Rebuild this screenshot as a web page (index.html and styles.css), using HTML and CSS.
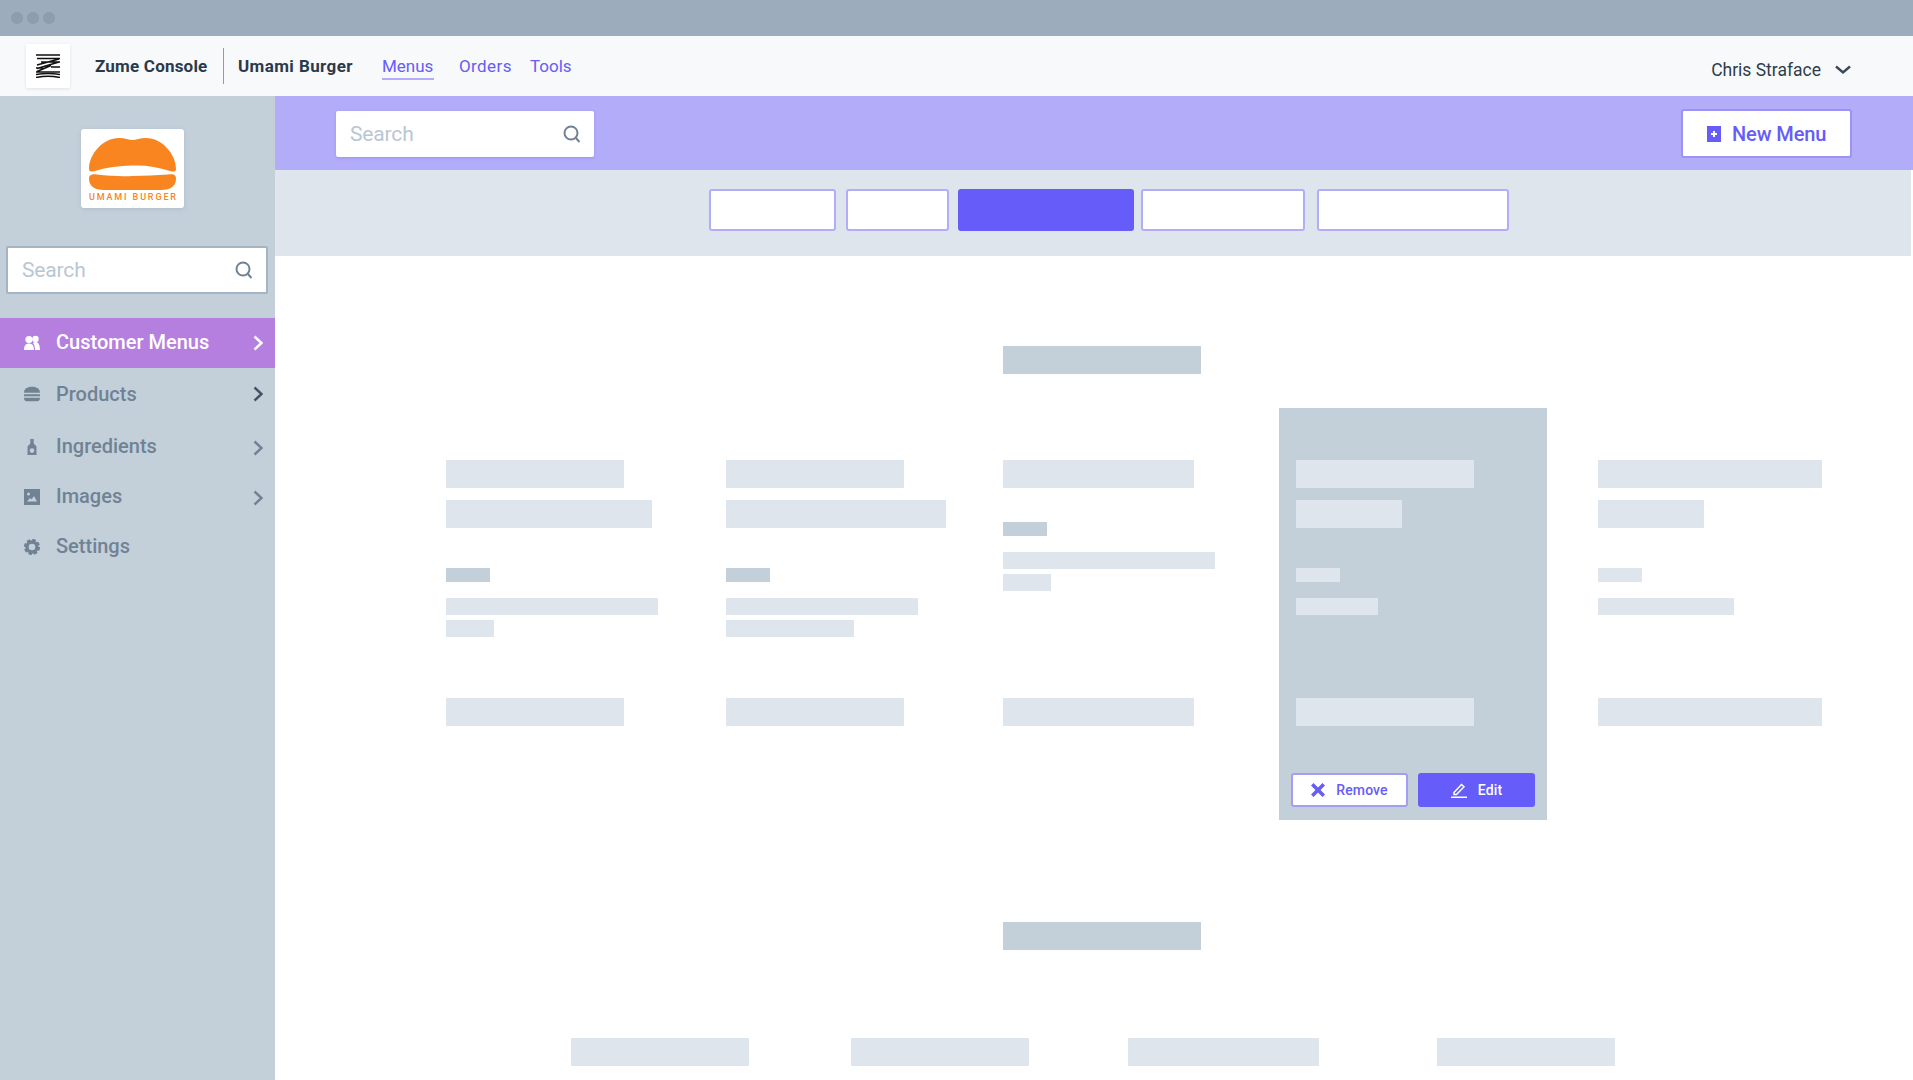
FILE: index.html
```html
<!DOCTYPE html>
<html lang="en">
<head>
<meta charset="utf-8">
<title>Zume Console</title>
<link rel="stylesheet" href="styles.css">
</head>
<body>
<div class="app">
  <div class="titlebar"><span class="dot"></span><span class="dot"></span><span class="dot"></span></div>
  <header class="topbar">
    <div class="zume">
      <svg width="24" height="24" viewBox="0 0 24 24" fill="none" stroke="#111">
        <path d="M0 1h24M1 4.500h23M5 8h19M1 11l22-6M1 14.500l22-6.500M1 17.500l14-6M15 13h9M0 14h7M0 18h24" stroke-width="1.600"/>
        <path d="M0 20.500q12-2 24 0M0 23.500q12-2.500 24 0" stroke-width="1.600"/>
      </svg>
    </div>
    <strong class="brand">Zume Console</strong>
    <span class="divider"></span>
    <strong class="client">Umami Burger</strong>
    <nav class="topnav">
      <a class="current">Menus</a>
      <a class="orders">Orders</a>
      <a class="tools">Tools</a>
    </nav>
    <div class="user">
      <span>Chris Straface</span>
      <svg width="16" height="10" viewBox="0 0 16 10" fill="none" stroke="#3a4856" stroke-width="2.400"><path d="M1 1.500l7 6 7-6"/></svg>
    </div>
  </header>
  <div class="body">
    <aside class="sidebar">
      <div class="brandcard">
        <svg width="103" height="79" viewBox="0 0 103 79">
          <path fill="#f98520" d="M8 40C8 25 22 9 38 9c6 0 10 2 13.500 2S59 9 65 9c16 0 30 16 30 31 0 3-3 3-6 2-12-4-24-6-38-5.500C38 37 26 38 14 42c-3 1-6 1-6-2z"/>
          <path fill="#f98520" d="M8 50c0-5 4-5 8-4.500 12 1.500 24 2 35.500 1.500 12-.5 24-.5 35.500-1.500 5-.5 8-.5 8 4.500 0 8-7 11-15 11H23C15 61 8 58 8 50z"/>
          <text class="brandtext" x="51.500" y="71" text-anchor="middle" textLength="87">UMAMI BURGER</text>
        </svg>
      </div>
      <div class="search side">
        <span>Search</span>
        <svg width="18" height="18" viewBox="0 0 18 18" fill="none" stroke="#718294" stroke-width="2"><circle cx="8" cy="8" r="6.500"/><path d="M12.500 12.500l4 4.500"/></svg>
      </div>
      <ul class="menu">
        <li class="item active">
          <svg width="16" height="16" viewBox="0 0 16 16" fill="currentColor"><circle cx="5" cy="4.500" r="3.600"/><circle cx="11.500" cy="4" r="3.200"/><path d="M0 15c0-4.500 2-6.500 5-6.500s5 2 5 6.500zM11 15c0-3-.5-5-2-7 1-.8 2-1 2.500-1 3 0 4.500 3 4.500 8z"/></svg>
          <span>Customer Menus</span>
          <svg class="chev" width="10" height="16" viewBox="0 0 10 16" fill="none" stroke="currentColor" stroke-width="2.400"><path d="M1.500 1.500l7 6.500-7 6.500"/></svg>
        </li>
        <li class="item products">
          <svg width="16" height="16" viewBox="0 0 16 16" fill="currentColor"><path d="M0 6.800C0 3 3 .8 8 .8s8 2.200 8 6zM0 8.300h16V10.300H0zM0 11.800h16c0 2-1 3.400-2.500 3.400h-11C1 15.200 0 13.800 0 11.800z"/></svg>
          <span>Products</span>
          <svg class="chev dark" width="10" height="16" viewBox="0 0 10 16" fill="none" stroke="currentColor" stroke-width="2.400"><path d="M1.500 1.500l7 6.500-7 6.500"/></svg>
        </li>
        <li class="item ingredients">
          <svg width="16" height="16" viewBox="0 0 16 16" fill="currentColor"><path fill-rule="evenodd" d="M6.300 0h3.400v4.500l2.800 3V16h-9V7.500l2.800-3zM8 9.300a2.300 2.300 0 1 0 0 4.600 2.300 2.300 0 0 0 0-4.600z"/></svg>
          <span>Ingredients</span>
          <svg class="chev low" width="10" height="16" viewBox="0 0 10 16" fill="none" stroke="currentColor" stroke-width="2.400"><path d="M1.500 1.500l7 6.500-7 6.500"/></svg>
        </li>
        <li class="item images">
          <svg width="16" height="16" viewBox="0 0 16 16" fill="currentColor"><path fill-rule="evenodd" d="M0 0h16v16H0zM3 12.500h10L10 7l-2.500 3.500L6 9zM4.500 3.500a1.500 1.500 0 1 0 0 3 1.500 1.500 0 0 0 0-3z"/></svg>
          <span>Images</span>
          <svg class="chev low" width="10" height="16" viewBox="0 0 10 16" fill="none" stroke="currentColor" stroke-width="2.400"><path d="M1.500 1.500l7 6.500-7 6.500"/></svg>
        </li>
        <li class="item settings">
          <svg width="16" height="16" viewBox="0 0 16 16"><circle cx="8" cy="8" r="5" fill="none" stroke="currentColor" stroke-width="3.400"/><circle cx="8" cy="8" r="7" fill="none" stroke="currentColor" stroke-width="2.200" stroke-dasharray="3.500 2"/></svg>
          <span>Settings</span>
        </li>
      </ul>
    </aside>
    <main class="main">
      <div class="actionbar">
        <div class="search top">
          <span>Search</span>
          <svg width="18" height="18" viewBox="0 0 18 18" fill="none" stroke="#718294" stroke-width="2"><circle cx="8" cy="8" r="6.500"/><path d="M12.500 12.500l4 4.500"/></svg>
        </div>
        <button class="newmenu" type="button">
          <svg width="14" height="16" viewBox="0 0 14 16"><path fill="#655cf9" d="M0 0h14v16H0z"/><path fill="#fff" d="M6 5h2v2h2v2H8v2H6V9H4V7h2z"/></svg>
          New Menu
        </button>
      </div>
      <div class="tabstrip">
        <span class="tab w127"></span>
        <span class="tab w103"></span>
        <span class="tab on w176"></span>
        <span class="tab w164"></span>
        <span class="tab w192"></span>
      </div>
      <section class="board">
        <div class="heading"><i class="bar dark b198"></i></div>
        <div class="grid">
          <div class="col">
            <i class="bar b178"></i><i class="bar b206"></i>
            <i class="chip dark"></i>
            <i class="line b212"></i><i class="line b48"></i>
            <i class="bar foot b178"></i>
          </div>
          <div class="col">
            <i class="bar b178"></i><i class="bar b220"></i>
            <i class="chip dark"></i>
            <i class="line b192"></i><i class="line b128"></i>
            <i class="bar foot b178"></i>
          </div>
          <div class="col">
            <i class="bar b191"></i>
            <i class="chip dark near"></i>
            <i class="line b212"></i><i class="line b48"></i>
            <i class="bar foot b191"></i>
          </div>
          <div class="col card">
            <i class="bar b178"></i><i class="bar b106"></i>
            <i class="chip"></i>
            <i class="line b82"></i>
            <i class="bar foot b178"></i>
            <div class="cardactions">
              <button class="mini ghost" type="button">
                <svg width="14" height="14" viewBox="0 0 14 14" fill="#655cf9"><path d="M0 2.500L2.500 0 7 4.500 11.500 0 14 2.500 9.500 7l4.500 4.500-2.500 2.500L7 9.500 2.500 14 0 11.500 4.500 7z"/></svg>
                Remove
              </button>
              <button class="mini solid" type="button">
                <svg width="16" height="16" viewBox="0 0 16 16" fill="none" stroke="#fff" stroke-width="1.500"><path d="M3 10.500L10.500 2.500l2.500 2.300L5.500 12.500H3zM0 15.300h16"/></svg>
                Edit
              </button>
            </div>
          </div>
          <div class="col">
            <i class="bar b224"></i><i class="bar b106"></i>
            <i class="chip"></i>
            <i class="line b136"></i>
            <i class="bar foot b224"></i>
          </div>
        </div>
        <div class="heading lower"><i class="bar dark b198"></i></div>
        <div class="footrow">
          <i class="bar b178"></i><i class="bar b178 gap102"></i><i class="bar b191 gap99"></i><i class="bar b178 gap118"></i>
        </div>
      </section>
    </main>
  </div>
</div>
</body>
</html>
```

FILE: styles.css
```css
* { box-sizing: border-box; }
html, body { margin: 0; height: 100%; background: #fff; }
body { font-family: Roboto, "Liberation Sans", sans-serif; color: #2b3a4a; overflow: hidden; }
.app { display: flex; flex-direction: column; height: 1080px; overflow: hidden; }

.titlebar { height: 36px; background: #9cacbc; display: flex; align-items: center; gap: 4px; padding-left: 11px; flex: none; }
.dot { width: 12px; height: 12px; border-radius: 50%; background: #8c9dae; }

.topbar { height: 60px; flex: none; background: #f7f9fb; display: flex; align-items: center; padding-left: 26px; }
.zume { width: 44px; height: 44px; background: #fff; border-radius: 2px; box-shadow: 0 1px 3px rgba(140,155,170,.25); display: flex; align-items: center; justify-content: center; }
.brand, .client { font-size: 17px; font-weight: 700; letter-spacing: .2px; white-space: nowrap; }
.brand { margin-left: 25px; width: 128px; }
.divider { width: 1px; height: 36px; background: #8c9dae; }
.client { margin-left: 14px; width: 144px; letter-spacing: .4px; }
.topnav { display: flex; align-items: flex-start; font-size: 17px; color: #655cf9; }
.topnav a { display: block; line-height: 24px; }
.current { width: 52px; border-bottom: 2px solid #b3acf9; margin-top: 2px; }
.orders { margin-left: 25px; width: 71px; margin-top: 2px; letter-spacing: .4px; }
.tools { white-space: nowrap; margin-top: 2px; }
.user { margin-left: auto; margin-right: 62px; display: flex; align-items: center; gap: 14px; font-size: 17.500px; padding-top: 8px; color: #2f3d4b; }
.user svg { margin-top: -1px; }

.body { flex: 1; display: flex; min-height: 0; }
.sidebar { width: 275px; flex: none; background: #c3d0da; padding-top: 33px; }
.brandcard { width: 103px; height: 79px; margin-left: 81px; background: #fff; border-radius: 3px; box-shadow: 0 1px 4px rgba(120,140,160,.25); }
.brandcard svg { display: block; }
.brandtext { font: 500 9px Roboto, sans-serif; fill: #f98520; }

.search { height: 46px; background: #fff; border-radius: 2px; display: flex; align-items: center; justify-content: space-between; font-size: 21px; color: #b9c6d3; letter-spacing: -.15px; }
.search.side { width: 262px; height: 48px; margin: 38px 0 0 6px; border: 2px solid #a5b4c3; padding: 0 13px 0 14px; }
.search.top { width: 258px; padding: 0 13px 0 14px; box-shadow: 0 1px 3px rgba(100,90,200,.3); }

.menu { list-style: none; margin: 24px 0 0; padding: 0; }
.item { display: flex; align-items: center; height: 50px; padding: 0 12px 0 24px; font-size: 20px; font-weight: 500; color: #718294; }
.item span { margin-left: 16px; margin-bottom: 2px; }
.item .chev { margin-left: auto; }
.item .chev.dark { color: #445362; }
.item .chev.low { margin-top: 2px; }
.active { background: #b57fe0; color: #fff; }
.products { margin-top: 1px; }
.products span { margin-bottom: 0; }
.ingredients { margin-top: 3px; }

.main { flex: 1; min-width: 0; display: flex; flex-direction: column; }
.actionbar { height: 74px; flex: none; background: #b3acf9; display: flex; align-items: flex-start; justify-content: space-between; padding: 15px 61px 0 61px; }
.newmenu { width: 171px; height: 49px; margin-top: -2px; border: 2px solid #9c92f5; border-radius: 3px; background: #fff; color: #655cf9; font: 500 20px Roboto, sans-serif; letter-spacing: -.1px; display: flex; align-items: center; gap: 11px; padding: 0 0 0 24px; }

.tabstrip { height: 86px; flex: none; margin-right: 2px; background: #dfe5ed; display: flex; padding: 19px 0 0 434px; }
.tab { height: 42px; background: #fff; border: 2px solid #b3acf9; border-radius: 3px; }
.tab.on { background: #655cf9; border-color: #655cf9; }
.w127 { width: 127px; }
.w103 { width: 103px; margin-left: 10px; }
.w176 { width: 176px; margin-left: 9px; }
.w164 { width: 164px; margin-left: 7px; }
.w192 { width: 192px; margin-left: 12px; }

.board { flex: 1; padding: 90px 0 0 171px; }
.bar, .line, .chip { display: block; background: #dfe5ed; flex: none; }
.bar { height: 28px; }
.line { height: 17px; }
.chip { height: 14px; width: 44px; margin-top: 40px; }
.dark { background: #c3d0da; }
.chip.near { margin-top: 34px; }
.heading { padding-left: 557px; }
.lower { margin-top: 102px; }
.b48 { width: 48px; } .b82 { width: 82px; } .b106 { width: 106px; } .b128 { width: 128px; } .b136 { width: 136px; }
.b178 { width: 178px; } .b191 { width: 191px; } .b192 { width: 192px; } .b198 { width: 198px; } .b206 { width: 206px; }
.b212 { width: 212px; } .b220 { width: 220px; } .b224 { width: 224px; }

.grid { display: grid; grid-template-columns: 280px 277px 276px 268px auto; margin-top: 34px; height: 412px; }
.col { display: flex; flex-direction: column; padding: 52px 0 94px; }
.col .bar + .bar:not(.foot) { margin-top: 12px; }
.col .chip + .line { margin-top: 16px; }
.col .line + .line { margin-top: 5px; }
.col .foot { margin-top: auto; }
.col:last-child { margin-left: 51px; }
.card { background: #c3d0da; padding: 52px 0 13px 17px; }
.cardactions { display: flex; gap: 10px; margin: 47px 0 0 -5px; }
.mini { height: 34px; border-radius: 3px; font: 500 14px Roboto, sans-serif; display: flex; align-items: center; justify-content: center; gap: 11px; padding: 0; letter-spacing: .1px; }
.ghost { width: 117px; background: #fff; border: 2px solid #a49df6; color: #655cf9; }
.solid { width: 117px; background: #655cf9; border: 0; color: #fff; }

.footrow { display: flex; margin: 88px 0 0 125px; }
.gap102 { margin-left: 102px; }
.gap99 { margin-left: 99px; }
.gap118 { margin-left: 118px; }
```
